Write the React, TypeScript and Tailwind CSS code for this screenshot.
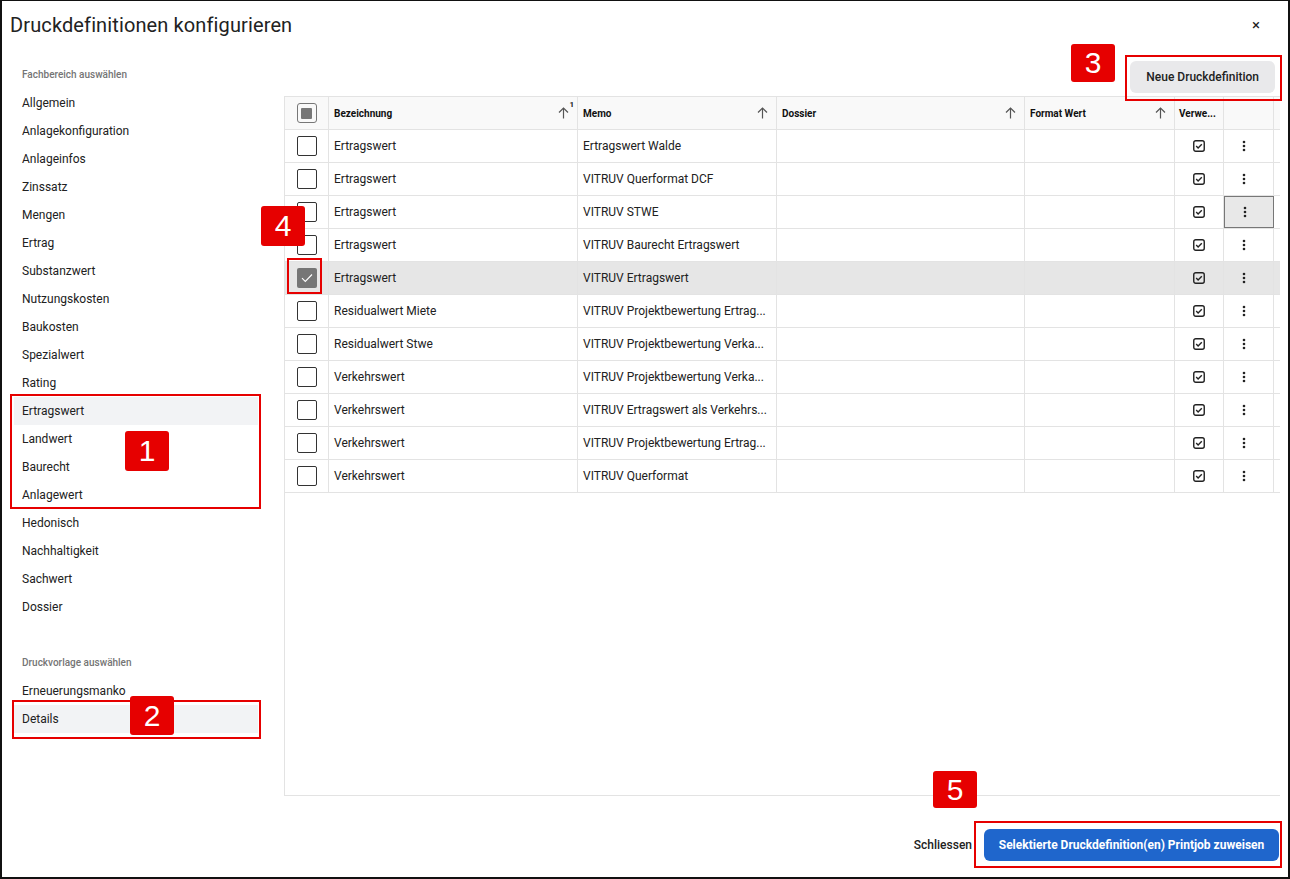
import React from "react";

const sideA = [
  "Allgemein",
  "Anlagekonfiguration",
  "Anlageinfos",
  "Zinssatz",
  "Mengen",
  "Ertrag",
  "Substanzwert",
  "Nutzungskosten",
  "Baukosten",
  "Spezialwert",
  "Rating",
  "Ertragswert",
  "Landwert",
  "Baurecht",
  "Anlagewert",
  "Hedonisch",
  "Nachhaltigkeit",
  "Sachwert",
  "Dossier",
];

const rows: [string, string][] = [
  ["Ertragswert", "Ertragswert Walde"],
  ["Ertragswert", "VITRUV Querformat DCF"],
  ["Ertragswert", "VITRUV STWE"],
  ["Ertragswert", "VITRUV Baurecht Ertragswert"],
  ["Ertragswert", "VITRUV Ertragswert"],
  ["Residualwert Miete", "VITRUV Projektbewertung Ertrag..."],
  ["Residualwert Stwe", "VITRUV Projektbewertung Verka..."],
  ["Verkehrswert", "VITRUV Projektbewertung Verka..."],
  ["Verkehrswert", "VITRUV Ertragswert als Verkehrs..."],
  ["Verkehrswert", "VITRUV Projektbewertung Ertrag..."],
  ["Verkehrswert", "VITRUV Querformat"],
];

const cols = "grid grid-cols-[44px_249px_199px_248px_150px_49px_50px_1fr]";

function SortArrow({ sup }: { sup?: boolean }) {
  return (
    <span className="relative inline-flex">
      <svg width="11" height="12" viewBox="0 0 11 12" fill="none" stroke="#555" strokeWidth="1.2">
        <path d="M5.5 11.5V1.2" />
        <path d="M1 5.5L5.5 1L10 5.5" />
      </svg>
      {sup && <span className="absolute -right-[5px] -top-[8px] text-[8px] font-bold text-[#222]">1</span>}
    </span>
  );
}

function CheckIcon() {
  return (
    <svg width="12" height="12" viewBox="0 0 12 12" fill="none">
      <rect x="0.75" y="0.75" width="10.5" height="10.5" rx="2" stroke="#222" strokeWidth="1.4" />
      <path d="M3.2 6.1L5.1 8L8.8 4.2" stroke="#222" strokeWidth="1.4" />
    </svg>
  );
}

function Kebab() {
  return (
    <svg width="4" height="12" viewBox="0 0 4 12" fill="#222">
      <circle cx="2" cy="2" r="1.3" />
      <circle cx="2" cy="6" r="1.3" />
      <circle cx="2" cy="10" r="1.3" />
    </svg>
  );
}

function Label({ n, cls }: { n: string; cls: string }) {
  return (
    <div
      className={`absolute flex items-center justify-center rounded-[3px] bg-[#e60000] text-white text-[30px] leading-none font-['Liberation_Sans',Arial,sans-serif] ${cls}`}
    >
      {n}
    </div>
  );
}

export default function App() {
  return (
    <div className="relative w-[1290px] h-[879px] bg-white overflow-hidden font-['Roboto','Noto_Sans',sans-serif] text-[#212121]">
      {/* header */}
      <div className="flex items-center justify-between h-[50px] pl-[10px] pr-[30px]">
        <div className="text-[20px] font-normal tracking-[0.12px] text-[#222]">Druckdefinitionen konfigurieren</div>
        <div className="text-[15px] leading-none text-[#222]">×</div>
      </div>

      <div className="flex h-[829px]">
        {/* sidebar */}
        <div className="w-[284px] pl-[14px] pr-[26px] flex flex-col">
          <div className="pt-[19px] pb-[8px] pl-[8px] text-[10px] leading-[12px] font-medium text-[#757575]">
            Fachbereich auswählen
          </div>
          {sideA.map((s, i) => (
            <div
              key={s}
              className={`h-[28px] flex items-center pl-[8px] text-[12px] ${i === 11 ? "bg-[#f2f3f5]" : ""}`}
            >
              {s}
            </div>
          ))}
          <div className="mt-[36px] pb-[8px] pl-[8px] text-[10px] leading-[12px] font-medium text-[#757575]">
            Druckvorlage auswählen
          </div>
          <div className="h-[28px] flex items-center pl-[8px] text-[12px]">Erneuerungsmanko</div>
          <div className="h-[28px] flex items-center pl-[8px] text-[12px] bg-[#f2f3f5]">Details</div>
        </div>

        {/* main */}
        <div className="flex-1 pr-[10px] flex flex-col">
          <div className="flex justify-end pt-[11px] pr-[5px]">
            <button className="h-[32px] px-[16px] rounded-[6px] bg-[#e9e9eb] text-[12px] font-medium text-[#222]">
              Neue Druckdefinition
            </button>
          </div>
          <div className="mt-[3px] h-[700px] border-l border-b border-[#e3e3e3] flex flex-col">
            {/* table header */}
            <div className={`${cols} h-[34px] bg-[#f9f9f9] border-y border-[#e3e3e3] text-[10px] font-bold text-[#111]`}>
              <div className="flex items-center justify-center border-r border-[#e3e3e3]">
                <div className="w-[20px] h-[20px] rounded-[3px] border border-[#777] flex items-center justify-center">
                  <div className="w-[11px] h-[11px] rounded-[1px] bg-[#777]" />
                </div>
              </div>
              <div className="flex items-center justify-between pl-[5px] pr-[8px] border-r border-[#e3e3e3]">
                <span>Bezeichnung</span>
                <SortArrow sup />
              </div>
              <div className="flex items-center justify-between pl-[5px] pr-[8px] border-r border-[#e3e3e3]">
                <span>Memo</span>
                <SortArrow />
              </div>
              <div className="flex items-center justify-between pl-[5px] pr-[8px] border-r border-[#e3e3e3]">
                <span>Dossier</span>
                <SortArrow />
              </div>
              <div className="flex items-center justify-between pl-[5px] pr-[8px] border-r border-[#e3e3e3]">
                <span>Format Wert</span>
                <SortArrow />
              </div>
              <div className="flex items-center pl-[4px] border-r border-[#e3e3e3]">
                <span>Verwe...</span>
              </div>
              <div className="border-r border-[#e3e3e3]" />
              <div />
            </div>
            {rows.map(([a, b], i) => {
              const sel = i === 4;
              return (
                <div
                  key={i}
                  className={`${cols} h-[33px] border-b border-[#e3e3e3] text-[12px] ${sel ? "bg-[#e6e6e6]" : ""}`}
                >
                  <div className="flex items-center justify-center border-r border-[#e3e3e3]">
                    {sel ? (
                      <div className="w-[20px] h-[20px] rounded-[2px] bg-[#767676] flex items-center justify-center">
                        <svg width="12" height="10" viewBox="0 0 12 10" fill="none">
                          <path d="M1 5.2L4.3 8.4L11 1.5" stroke="#fff" strokeWidth="1.1" />
                        </svg>
                      </div>
                    ) : (
                      <div className="w-[20px] h-[20px] rounded-[2px] border border-[#333] bg-white" />
                    )}
                  </div>
                  <div className="flex items-center pl-[5px] border-r border-[#e3e3e3] whitespace-nowrap overflow-hidden">
                    {a}
                  </div>
                  <div className="flex items-center pl-[5px] border-r border-[#e3e3e3] whitespace-nowrap overflow-hidden">
                    {b}
                  </div>
                  <div className="border-r border-[#e3e3e3]" />
                  <div className="border-r border-[#e3e3e3]" />
                  <div className="flex items-center justify-center border-r border-[#e3e3e3]">
                    <CheckIcon />
                  </div>
                  <div
                    className={`flex items-center pl-[18px] ${i === 2 ? "bg-[#e8e8e8] border border-[#777]" : "border-r border-[#e3e3e3]"}`}
                  >
                    <Kebab />
                  </div>
                  <div />
                </div>
              );
            })}
          </div>
          <div className="flex items-center justify-end gap-[12px] mt-[33px] pr-[1px]">
            <span className="text-[12px] font-medium text-[#222]">Schliessen</span>
            <button className="h-[32px] w-[295px] rounded-[6px] bg-[#1f66cc] text-white text-[12px] font-bold">
              Selektierte Druckdefinition(en) Printjob zuweisen
            </button>
          </div>
        </div>
      </div>

      {/* annotations */}
      <div className="absolute left-[10px] top-[394px] w-[251px] h-[115px] border-2 border-[#e60000]" />
      <Label n="1" cls="left-[125px] top-[431px] w-[44px] h-[40px]" />
      <div className="absolute left-[12px] top-[700px] w-[249px] h-[39px] border-2 border-[#e60000]" />
      <Label n="2" cls="left-[130px] top-[696px] w-[44px] h-[39px]" />
      <div className="absolute left-[1125px] top-[55px] w-[157px] h-[46px] border-2 border-[#e60000]" />
      <Label n="3" cls="left-[1071px] top-[44px] w-[44px] h-[38px]" />
      <div className="absolute left-[287px] top-[258px] w-[35px] h-[36px] border-2 border-[#e60000]" />
      <Label n="4" cls="left-[261px] top-[206px] w-[44px] h-[40px]" />
      <div className="absolute left-[974px] top-[821px] w-[308px] h-[47px] border-2 border-[#e60000]" />
      <Label n="5" cls="left-[933px] top-[771px] w-[44px] h-[37px]" />

      {/* outer frame */}
      <div className="absolute inset-0 pointer-events-none border-l-2 border-r-2 border-b-2 border-t border-[#111]" />
    </div>
  );
}
